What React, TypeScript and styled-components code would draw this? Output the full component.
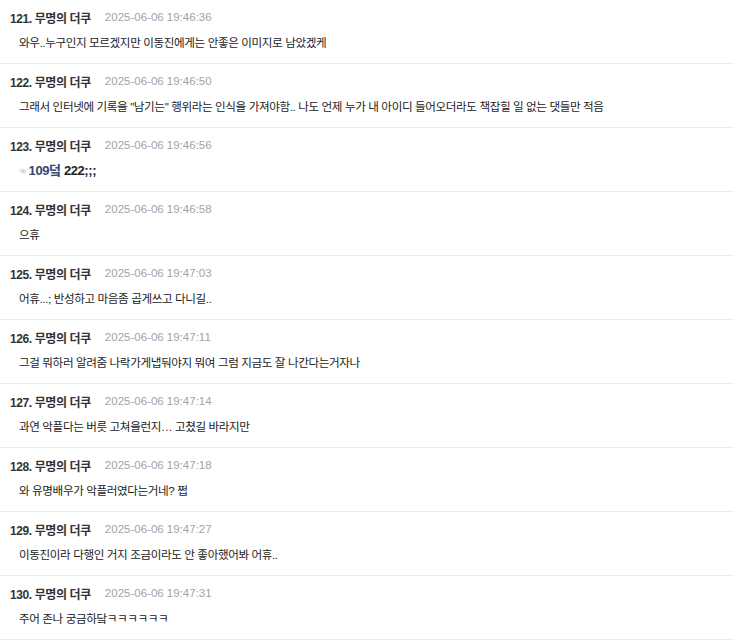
import * as React from "react";
import styled, { createGlobalStyle } from "styled-components";

interface Comment {
  no: number;
  nick: string;
  time: string;
  text: string;
  anchor?: string;
}

const comments: Comment[] = [
  { no: 121, nick: "무명의 더쿠", time: "2025-06-06 19:46:36", text: "와우..누구인지 모르겠지만 이동진에게는 안좋은 이미지로 남았겠케" },
  { no: 122, nick: "무명의 더쿠", time: "2025-06-06 19:46:50", text: "그래서 인터넷에 기록을 \"남기는\" 행위라는 인식을 가져야함.. 나도 언제 누가 내 아이디 들어오더라도 책잡힐 일 없는 댓들만 적음" },
  { no: 123, nick: "무명의 더쿠", time: "2025-06-06 19:46:56", text: " 222;;;", anchor: "109덬" },
  { no: 124, nick: "무명의 더쿠", time: "2025-06-06 19:46:58", text: "으휴" },
  { no: 125, nick: "무명의 더쿠", time: "2025-06-06 19:47:03", text: "어휴...; 반성하고 마음좀 곱게쓰고 다니길.." },
  { no: 126, nick: "무명의 더쿠", time: "2025-06-06 19:47:11", text: "그걸 뭐하러 알려줌 나락가게냅둬야지 뭐여 그럼 지금도 잘 나간다는거자나" },
  { no: 127, nick: "무명의 더쿠", time: "2025-06-06 19:47:14", text: "과연 악플다는 버릇 고쳐을런지… 고쳤길 바라지만" },
  { no: 128, nick: "무명의 더쿠", time: "2025-06-06 19:47:18", text: "와 유명배우가 악플러였다는거네? 쩝" },
  { no: 129, nick: "무명의 더쿠", time: "2025-06-06 19:47:27", text: "이동진이라 다행인 거지 조금이라도 안 좋아했어봐 어휴.." },
  { no: 130, nick: "무명의 더쿠", time: "2025-06-06 19:47:31", text: "주어 존나 궁금하닼ㅋㅋㅋㅋㅋㅋ" },
];

const GlobalStyle = createGlobalStyle`
  body {
    margin: 0;
    background: #fff;
    font-family: "Liberation Sans", "Noto Sans CJK KR", sans-serif;
    -webkit-font-smoothing: antialiased;
  }
`;

const List = styled.ul`
  list-style: none;
  margin: 0;
  padding: 0;
`;

const Row = styled.li`
  padding: 8px 10px 11px;
  border-bottom: 1px solid #ececec;
`;

const Meta = styled.div`
  display: flex;
  align-items: center;
  gap: 14px;
  height: 18px;
`;

const Nick = styled.span`
  font-size: 12px;
  font-weight: 700;
  color: #333;
  letter-spacing: -0.4px;
`;

const Time = styled.span`
  font-size: 11.5px;
  color: #a3a3a3;
`;

const Body = styled.div<{ $strong?: boolean }>`
  margin-top: 8px;
  padding-left: 9px;
  height: 18px;
  font-size: ${(p) => (p.$strong ? "13px" : "11.6px")};
  font-weight: ${(p) => (p.$strong ? 700 : 400)};
  line-height: 18px;
  color: #222;
  letter-spacing: -0.4px;
  white-space: nowrap;
`;

const Anchor = styled.a`
  color: #34496f;
  text-decoration: none;

  &::before {
    content: "☞";
    display: inline-block;
    line-height: 1;
    color: #9aa3b2;
    font-weight: 400;
    font-size: 9px;
    margin-right: 1px;
    vertical-align: 1px;
  }
`;

export default function App() {
  return (
    <>
      <GlobalStyle />
      <List>
        {comments.map((c) => (
          <Row key={c.no}>
            <Meta>
              <Nick>
                {c.no}. {c.nick}
              </Nick>
              <Time>{c.time}</Time>
            </Meta>
            <Body $strong={!!c.anchor}>
              {c.anchor && <Anchor href="#">{c.anchor}</Anchor>}
              {c.text}
            </Body>
          </Row>
        ))}
      </List>
    </>
  );
}
